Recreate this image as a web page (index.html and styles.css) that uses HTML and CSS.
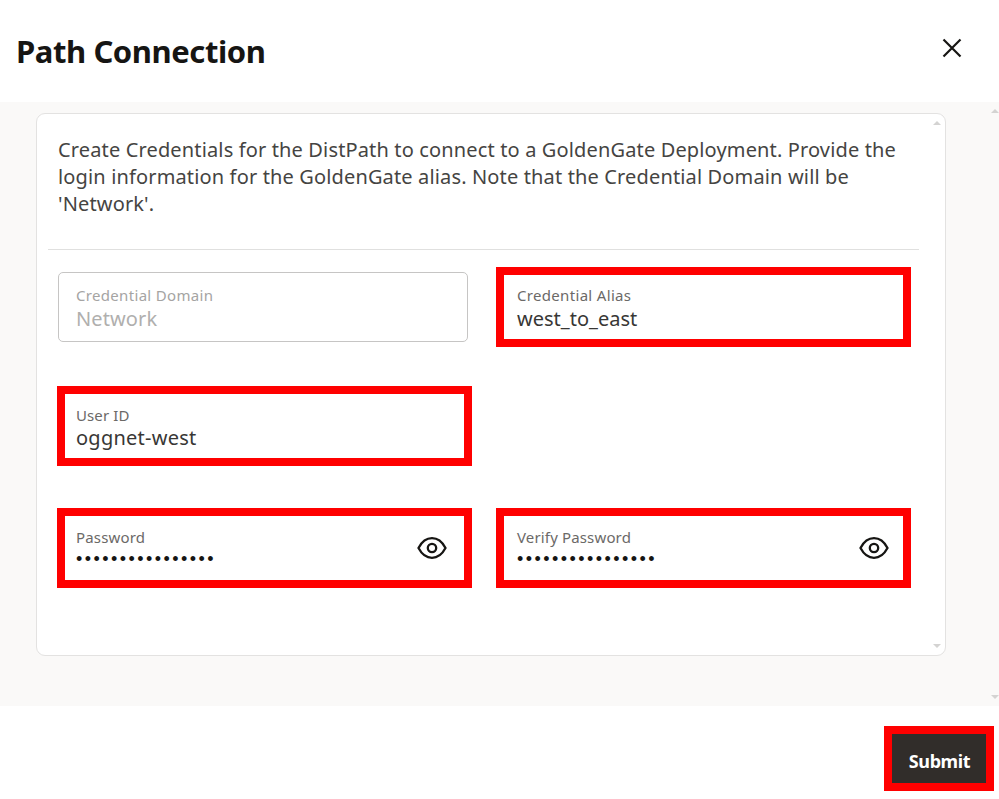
FILE: index.html
```html
<!DOCTYPE html>
<html lang="en">
<head>
<meta charset="utf-8">
<title>Path Connection</title>
<link rel="stylesheet" href="styles.css">
</head>
<body>
<div class="dialog">
  <header class="header">
    <h1 class="title">Path Connection</h1>
    <svg class="close" viewBox="0 0 20 20" aria-label="Close"><path d="M1.5 1.5 18.5 18.5M18.5 1.5 1.5 18.5"/></svg>
  </header>
  <main class="body">
    <section class="card">
      <p class="intro">
        <span class="line">Create Credentials for the DistPath to connect to a GoldenGate Deployment. Provide the</span>
        <span class="line">login information for the GoldenGate alias. Note that the Credential Domain will be</span>
        <span class="line">'Network'.</span>
      </p>
      <div class="fields">
        <div class="field disabled">
          <span class="label">Credential Domain</span>
          <span class="value">Network</span>
        </div>
        <div class="field marked right">
          <span class="label">Credential Alias</span>
          <span class="value">west_to_east</span>
        </div>
        <div class="field marked user">
          <span class="label">User ID</span>
          <span class="value value-user">oggnet-west</span>
        </div>
        <div class="field marked">
          <span class="label label-pass">Password</span>
          <span class="dots">••••••••••••••••</span>
          <svg class="eye" viewBox="0 0 30 24"><path d="M1.500 12C5.200 5 9.600 2.200 15 2.200S24.800 5 28.500 12C24.800 19 20.400 21.800 15 21.800S5.200 19 1.500 12Z"/><circle cx="15" cy="12" r="4.200"/></svg>
        </div>
        <div class="field marked right">
          <span class="label label-pass">Verify Password</span>
          <span class="dots">••••••••••••••••</span>
          <svg class="eye" viewBox="0 0 30 24"><path d="M1.500 12C5.200 5 9.600 2.200 15 2.200S24.800 5 28.500 12C24.800 19 20.400 21.800 15 21.800S5.200 19 1.500 12Z"/><circle cx="15" cy="12" r="4.200"/></svg>
        </div>
      </div>
      <i class="arrow up"></i>
      <i class="arrow down"></i>
    </section>
    <i class="arrow up"></i>
    <i class="arrow down"></i>
  </main>
  <footer class="footer"><button class="submit">Submit</button></footer>
</div>
</body>
</html>
```
FILE: styles.css
```css
* { box-sizing: border-box; }
body { margin: 0; background: #fff; color: #161513; font-family: "Noto Sans", sans-serif; }
.dialog { width: 999px; height: 799px; display: flex; flex-direction: column; overflow: hidden; }
.header { height: 102px; padding: 0 37px 0 16px; display: flex; justify-content: space-between; }
.title { margin: 29px 0 0; font-size: 31px; line-height: 44px; font-weight: 700; letter-spacing: -0.42px; white-space: nowrap; }
.close { width: 20px; height: 20px; margin-top: 38px; fill: none; stroke: #161513; stroke-width: 2.2; }
.body { position: relative; height: 604px; padding: 11px 53px 50px 36px; background: #faf9f8; }
.card { position: relative; width: 910px; height: 543px; padding: 0 26px 0 11px; background: #fff; border: 1px solid #e3e2e1; border-radius: 9px; }
.intro { margin: 0; height: 136px; padding: 22px 0 0 10px; border-bottom: 1px solid #e0e0df; font-size: 20px; line-height: 27px; letter-spacing: 0.145px; color: #454442; }
.line { display: block; white-space: nowrap; width: max-content; }
.fields { display: grid; grid-template-columns: 415px 415px; column-gap: 24px; grid-template-rows: 119px 122px 80px; padding: 17px 0 0 9px; }
.field { position: relative; width: 415px; height: 80px; display: flex; flex-direction: column; padding: 11px; white-space: nowrap; }
.marked { border: 8px solid #f00; }
.right { padding-left: 13px; }
.user { grid-column: 1 / 3; }
.disabled { width: 410px; height: 70px; margin: 5px 0 0 1px; padding: 13px 17px; border: 1px solid #c6c5c4; border-radius: 5px; }
.label { width: max-content; font-size: 15px; line-height: 20px; letter-spacing: 0.32px; color: #6b6967; margin-top: -1px; }
.user .label { margin-top: 0; letter-spacing: 0.1px; }
.label-pass { margin-top: 0; letter-spacing: 0.15px; }
.disabled .label { color: #a5a4a3; }
.value { width: max-content; font-size: 20px; line-height: 26px; color: #383735; margin-top: 1px; }
.user .value { margin-top: 0; }
.value-user { letter-spacing: 0.25px; }
.disabled .value { color: #b0afae; letter-spacing: 0.1px; }
.dots { width: max-content; font-family: "Liberation Sans", sans-serif; font-size: 18px; line-height: 22px; letter-spacing: 2.45px; margin-top: 1px; }
.eye { position: absolute; right: 17px; top: 20px; width: 30px; height: 24px; fill: none; stroke: #161513; stroke-width: 2.300; }
.right .eye { right: 14px; }
.arrow { position: absolute; right: 4px; width: 0; height: 0; border: solid transparent; border-width: 0 4px; }
.body > .arrow { right: 0; }
.up { top: 7px; border-bottom: 4px solid #d4d3d2; }
.down { bottom: 7px; border-top: 4px solid #d4d3d2; }
.footer { height: 93px; padding: 20px 5px 0 0; display: flex; justify-content: flex-end; }
.submit { width: 110px; height: 65px; padding: 5px 0 0 1px; border: 8px solid #f00; border-radius: 0; background: #312d2a; color: #fff; font: 700 18px/24px "Noto Sans", sans-serif; letter-spacing: -0.4px; }
```
